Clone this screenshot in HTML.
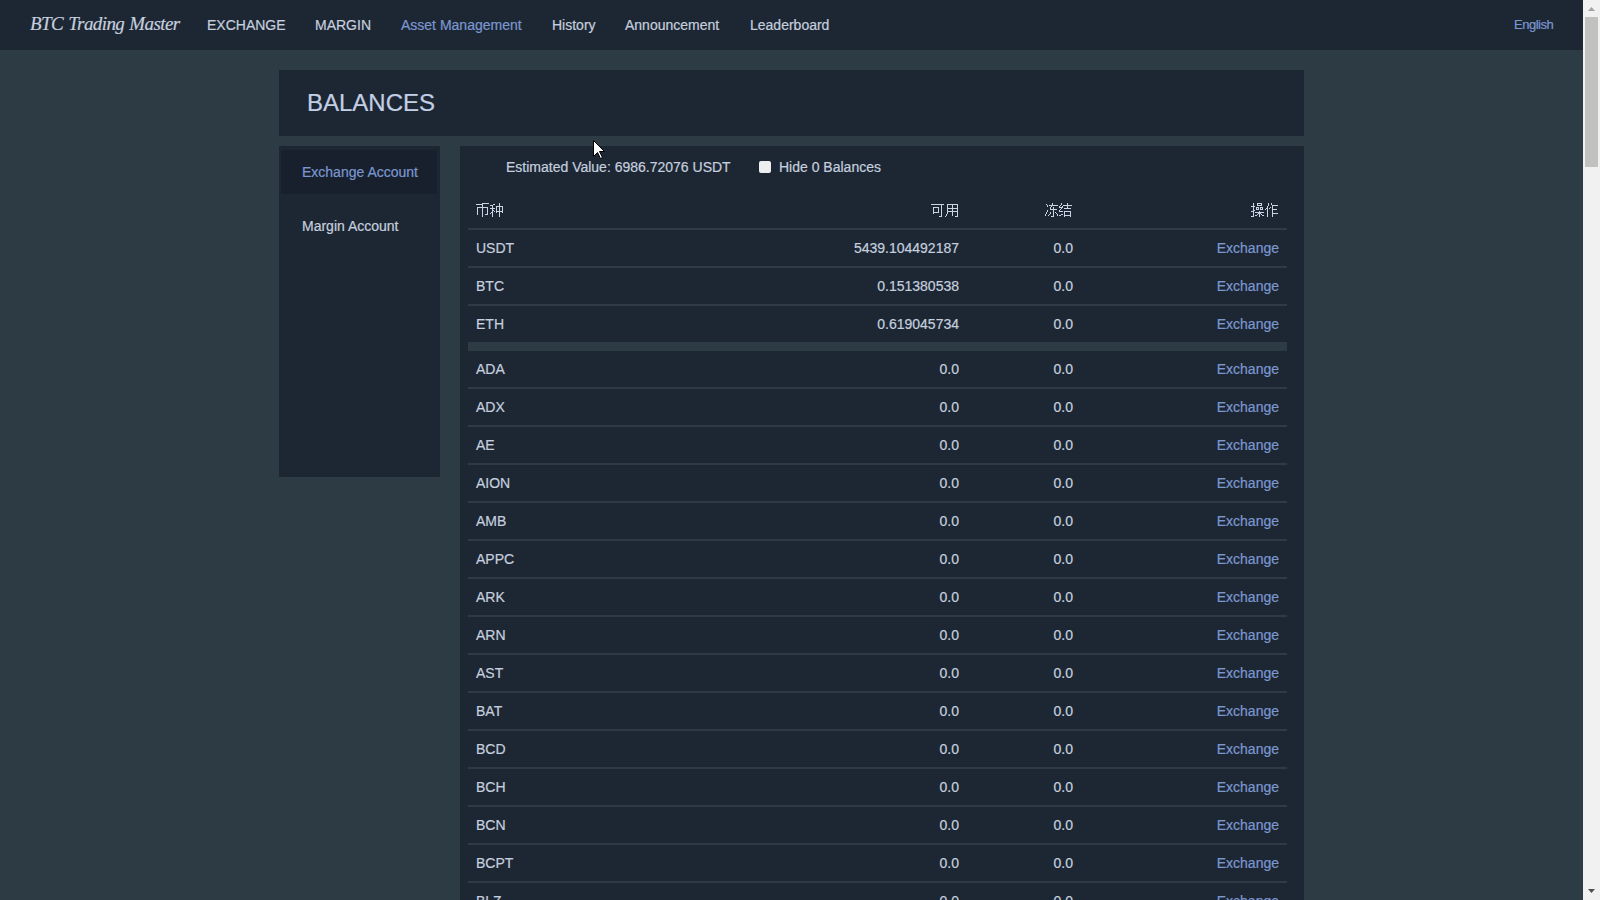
<!DOCTYPE html>
<html><head><meta charset="utf-8">
<style>
*{box-sizing:border-box;margin:0;padding:0}
html,body{width:1600px;height:900px;overflow:hidden}
body{background:#2c3b44;font-family:"Liberation Sans",sans-serif;color:#c5cfdf;position:relative;-webkit-text-stroke:0.2px}
.nav{position:absolute;left:0;top:0;width:1583px;height:50px;background:#1d2734}
.logo{position:absolute;left:30px;top:13px;font-family:"Liberation Serif",serif;font-style:italic;font-size:19px;letter-spacing:-0.6px;word-spacing:1px;color:#c5cfdf;white-space:nowrap;line-height:22px}
.ni{position:absolute;top:17px;font-size:14px;white-space:nowrap;color:#c5cfdf;line-height:16px}
.blue{color:#7c97d0}
.sb{position:absolute;left:1583px;top:0;width:17px;height:900px;background:#f1f1f1}
.thumb{position:absolute;left:1585px;top:17px;width:13px;height:150px;background:#c1c2bf}
.panel{position:absolute;background:#1d2734}
.t{position:absolute;white-space:nowrap;font-size:14px;line-height:16px}
.r{text-align:right}
.cj{position:absolute;display:block}
.hl{position:absolute;left:468px;width:819px;height:2px;background:#2e3b46}
.band{position:absolute;left:468px;width:819px;height:9px;background:#2c3b44}
</style></head><body>
<div class="nav">
<div class="logo">BTC Trading Master</div>
<div class="ni" style="left:207px">EXCHANGE</div>
<div class="ni" style="left:315px">MARGIN</div>
<div class="ni blue" style="left:401px">Asset Management</div>
<div class="ni" style="left:552px">History</div>
<div class="ni" style="left:625px">Announcement</div>
<div class="ni" style="left:750px">Leaderboard</div>
<div class="ni blue" style="left:1514px;font-size:13px;letter-spacing:-0.5px">English</div>
</div>
<div class="sb"></div><div class="thumb"></div>
<svg style="position:absolute;left:1583px;top:0" width="17" height="900"><path d="M5 11 L8.5 7 L12 11 Z" fill="#a3a3a3"/><path d="M5 889 L8.5 893 L12 889 Z" fill="#505050"/></svg>

<div class="panel" style="left:279px;top:70px;width:1025px;height:66px"></div>
<div class="t" style="left:307px;top:89px;font-size:24px;color:#c2cfe4;line-height:28px">BALANCES</div>

<div class="panel" style="left:279px;top:146px;width:161px;height:331px"></div>
<div class="panel" style="left:281px;top:150px;width:156px;height:44px;background:#17202c"></div>
<div class="t blue" style="left:302px;top:164px">Exchange Account</div>
<div class="t" style="left:302px;top:218px">Margin Account</div>

<div class="panel" style="left:460px;top:146px;width:844px;height:760px"></div>
<div class="t" style="left:506px;top:159px">Estimated Value: 6986.72076 USDT</div>
<div style="position:absolute;left:759px;top:161px;width:12px;height:12px;background:#eceef0;border-radius:2px"></div>
<div class="t" style="left:779px;top:159px">Hide 0 Balances</div>
<svg class="cj" style="left:474px;top:202px" width="30" height="16" shape-rendering="crispEdges"><path fill="#c9d3e2" d="M8 1h7v1h-7zM2 2h6v1h-6zM8 1h1v14h-1zM3 5h11v1h-11zM3 5h1v8h-1zM13 5h1v8h-1zM11 12h3v1h-3zM19 2h2v1h-2zM16 3h3v1h-3zM18 3h1v12h-1zM16 6h5v1h-5zM19 8h1v1h-1zM20 9h1v1h-1zM17 10h1v1h-1zM16 11h1v1h-1zM22 4h7v1h-7zM22 4h1v7h-1zM28 4h1v7h-1zM22 9h7v1h-7zM25 1h1v14h-1z"/></svg>
<svg class="cj" style="left:929px;top:202px" width="30" height="16" shape-rendering="crispEdges"><path fill="#c9d3e2" d="M2 2h13v1h-13zM12 2h1v13h-1zM10 14h3v1h-3zM4 5h6v1h-6zM4 5h1v7h-1zM9 5h1v6h-1zM4 10h6v1h-6zM18 2h1v10h-1zM17 12h1v2h-1zM16 14h1v1h-1zM18 2h11v1h-11zM28 2h1v13h-1zM26 14h3v1h-3zM23 2h1v12h-1zM18 6h11v1h-11zM18 9h11v1h-11z"/></svg>
<svg class="cj" style="left:1043px;top:202px" width="30" height="16" shape-rendering="crispEdges"><path fill="#c9d3e2" d="M3 2h1v1h-1zM4 3h1v2h-1zM4 8h1v2h-1zM3 10h1v2h-1zM2 12h1v2h-1zM9 1h1v2h-1zM6 3h9v1h-9zM8 4h1v1h-1zM7 5h1v3h-1zM7 7h7v1h-7zM10 5h1v10h-1zM8 14h3v1h-3zM7 10h1v2h-1zM6 12h1v1h-1zM5 13h1v1h-1zM12 10h1v1h-1zM13 11h1v1h-1zM14 12h1v2h-1zM18 1h1v2h-1zM17 3h1v1h-1zM16 4h1v2h-1zM19 4h1v1h-1zM17 5h3v1h-3zM18 6h1v1h-1zM17 7h1v1h-1zM16 8h1v2h-1zM17 9h3v1h-3zM18 12h2v1h-2zM16 13h2v1h-2zM24 1h1v6h-1zM20 3h9v1h-9zM21 6h7v1h-7zM21 9h7v1h-7zM21 9h1v6h-1zM27 9h1v6h-1zM21 13h7v1h-7z"/></svg>
<svg class="cj" style="left:1249px;top:202px" width="30" height="16" shape-rendering="crispEdges"><path fill="#c9d3e2" d="M4 1h1v14h-1zM2 4h4v1h-4zM5 8h1v1h-1zM2 9h3v1h-3zM2 14h3v1h-3zM8 1h5v1h-5zM8 3h5v1h-5zM8 1h1v3h-1zM12 1h1v3h-1zM7 5h3v1h-3zM7 7h3v1h-3zM7 5h1v3h-1zM9 5h1v3h-1zM11 5h3v1h-3zM11 7h3v1h-3zM11 5h1v3h-1zM13 5h1v3h-1zM6 10h9v1h-9zM10 9h1v6h-1zM9 11h1v1h-1zM8 12h1v1h-1zM6 13h2v1h-2zM11 11h1v1h-1zM12 12h1v1h-1zM13 13h2v1h-2zM19 1h1v3h-1zM18 4h1v11h-1zM17 6h1v1h-1zM16 7h1v1h-1zM22 1h1v2h-1zM23 3h6v1h-6zM23 3h1v12h-1zM21 5h1v1h-1zM20 6h1v1h-1zM23 7h5v1h-5zM23 11h6v1h-6z"/></svg>
<div class="hl" style="top:228px"></div>
<div class="t" style="left:476px;top:240px">USDT</div><div class="t r" style="right:641px;top:240px">5439.104492187</div><div class="t r" style="right:527px;top:240px">0.0</div><div class="t r blue" style="right:321px;top:240px">Exchange</div>
<div class="hl" style="top:266px"></div>
<div class="t" style="left:476px;top:278px">BTC</div><div class="t r" style="right:641px;top:278px">0.151380538</div><div class="t r" style="right:527px;top:278px">0.0</div><div class="t r blue" style="right:321px;top:278px">Exchange</div>
<div class="hl" style="top:304px"></div>
<div class="t" style="left:476px;top:316px">ETH</div><div class="t r" style="right:641px;top:316px">0.619045734</div><div class="t r" style="right:527px;top:316px">0.0</div><div class="t r blue" style="right:321px;top:316px">Exchange</div>
<div class="band" style="top:342px"></div>
<div class="t" style="left:476px;top:361px">ADA</div><div class="t r" style="right:641px;top:361px">0.0</div><div class="t r" style="right:527px;top:361px">0.0</div><div class="t r blue" style="right:321px;top:361px">Exchange</div>
<div class="hl" style="top:387px"></div>
<div class="t" style="left:476px;top:399px">ADX</div><div class="t r" style="right:641px;top:399px">0.0</div><div class="t r" style="right:527px;top:399px">0.0</div><div class="t r blue" style="right:321px;top:399px">Exchange</div>
<div class="hl" style="top:425px"></div>
<div class="t" style="left:476px;top:437px">AE</div><div class="t r" style="right:641px;top:437px">0.0</div><div class="t r" style="right:527px;top:437px">0.0</div><div class="t r blue" style="right:321px;top:437px">Exchange</div>
<div class="hl" style="top:463px"></div>
<div class="t" style="left:476px;top:475px">AION</div><div class="t r" style="right:641px;top:475px">0.0</div><div class="t r" style="right:527px;top:475px">0.0</div><div class="t r blue" style="right:321px;top:475px">Exchange</div>
<div class="hl" style="top:501px"></div>
<div class="t" style="left:476px;top:513px">AMB</div><div class="t r" style="right:641px;top:513px">0.0</div><div class="t r" style="right:527px;top:513px">0.0</div><div class="t r blue" style="right:321px;top:513px">Exchange</div>
<div class="hl" style="top:539px"></div>
<div class="t" style="left:476px;top:551px">APPC</div><div class="t r" style="right:641px;top:551px">0.0</div><div class="t r" style="right:527px;top:551px">0.0</div><div class="t r blue" style="right:321px;top:551px">Exchange</div>
<div class="hl" style="top:577px"></div>
<div class="t" style="left:476px;top:589px">ARK</div><div class="t r" style="right:641px;top:589px">0.0</div><div class="t r" style="right:527px;top:589px">0.0</div><div class="t r blue" style="right:321px;top:589px">Exchange</div>
<div class="hl" style="top:615px"></div>
<div class="t" style="left:476px;top:627px">ARN</div><div class="t r" style="right:641px;top:627px">0.0</div><div class="t r" style="right:527px;top:627px">0.0</div><div class="t r blue" style="right:321px;top:627px">Exchange</div>
<div class="hl" style="top:653px"></div>
<div class="t" style="left:476px;top:665px">AST</div><div class="t r" style="right:641px;top:665px">0.0</div><div class="t r" style="right:527px;top:665px">0.0</div><div class="t r blue" style="right:321px;top:665px">Exchange</div>
<div class="hl" style="top:691px"></div>
<div class="t" style="left:476px;top:703px">BAT</div><div class="t r" style="right:641px;top:703px">0.0</div><div class="t r" style="right:527px;top:703px">0.0</div><div class="t r blue" style="right:321px;top:703px">Exchange</div>
<div class="hl" style="top:729px"></div>
<div class="t" style="left:476px;top:741px">BCD</div><div class="t r" style="right:641px;top:741px">0.0</div><div class="t r" style="right:527px;top:741px">0.0</div><div class="t r blue" style="right:321px;top:741px">Exchange</div>
<div class="hl" style="top:767px"></div>
<div class="t" style="left:476px;top:779px">BCH</div><div class="t r" style="right:641px;top:779px">0.0</div><div class="t r" style="right:527px;top:779px">0.0</div><div class="t r blue" style="right:321px;top:779px">Exchange</div>
<div class="hl" style="top:805px"></div>
<div class="t" style="left:476px;top:817px">BCN</div><div class="t r" style="right:641px;top:817px">0.0</div><div class="t r" style="right:527px;top:817px">0.0</div><div class="t r blue" style="right:321px;top:817px">Exchange</div>
<div class="hl" style="top:843px"></div>
<div class="t" style="left:476px;top:855px">BCPT</div><div class="t r" style="right:641px;top:855px">0.0</div><div class="t r" style="right:527px;top:855px">0.0</div><div class="t r blue" style="right:321px;top:855px">Exchange</div>
<div class="hl" style="top:881px"></div>
<div class="t" style="left:476px;top:893px">BLZ</div><div class="t r" style="right:641px;top:893px">0.0</div><div class="t r" style="right:527px;top:893px">0.0</div><div class="t r blue" style="right:321px;top:893px">Exchange</div>
<div class="hl" style="top:919px"></div>
<svg style="position:absolute;left:593px;top:140px" width="14" height="20"><path d="M0.5 0.5 L0.5 16.5 L4.5 12.5 L7.5 18.5 L9.5 17.5 L6.5 11.5 L11.5 11.5 Z" fill="#fff" stroke="#000" stroke-width="1"/></svg>
</body></html>
